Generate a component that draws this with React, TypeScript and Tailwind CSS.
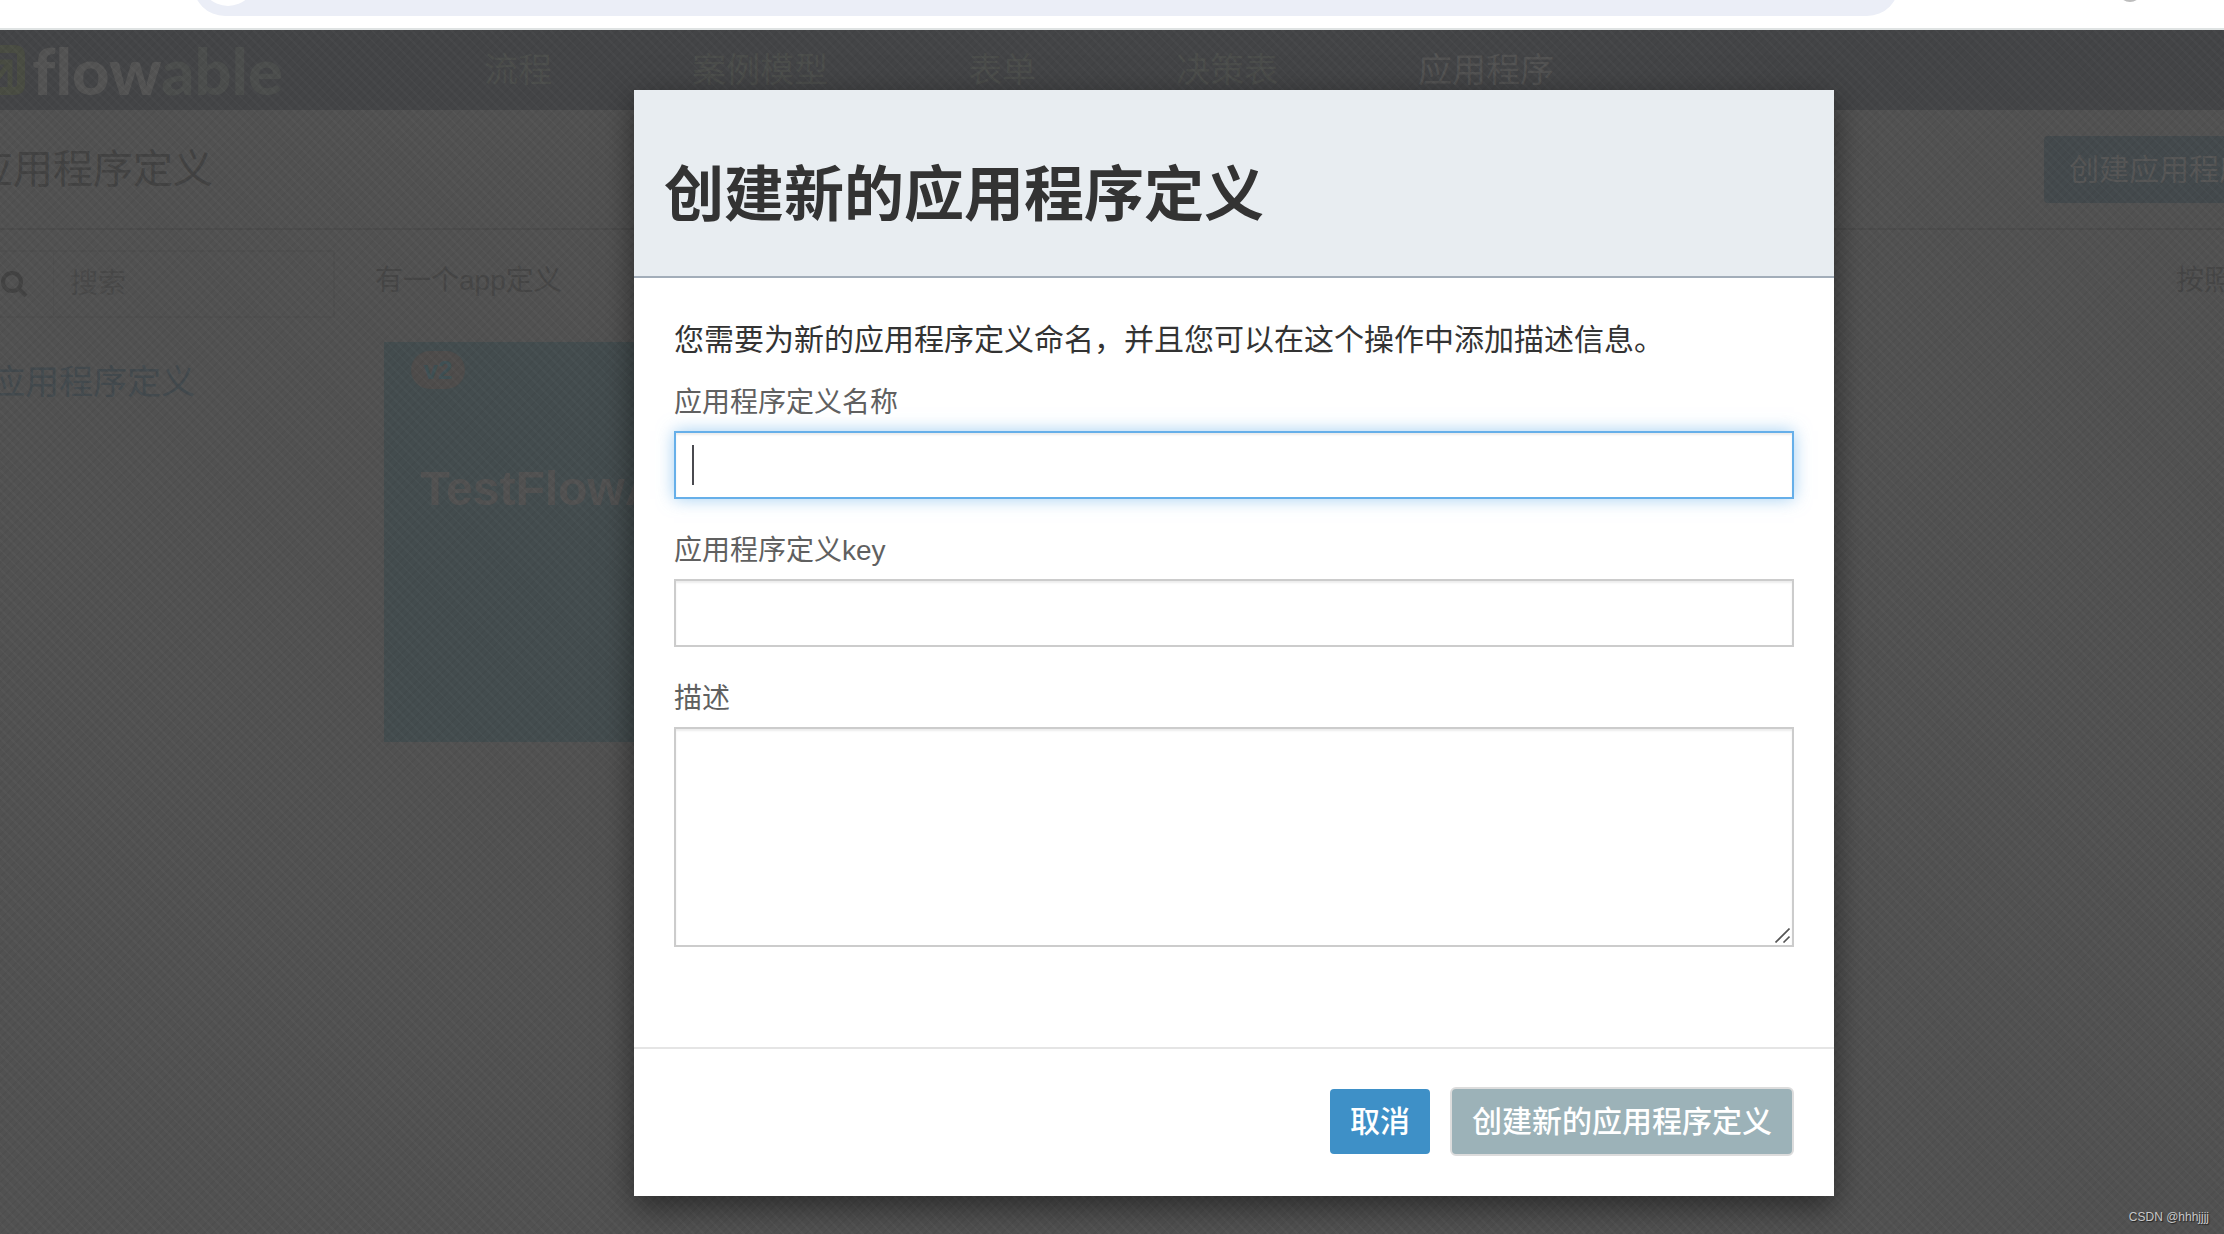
import { useState } from 'react';

const navItems = ['流程', '案例模型', '表单', '决策表', '应用程序'];

type FieldProps = {
  id: string;
  label: string;
  value: string;
  focused?: boolean;
  onChange: (value: string) => void;
};

function TextField({ id, label, value, focused, onChange }: FieldProps) {
  return (
    <div className="mb-7">
      <label htmlFor={id} className="block pb-[6px] pt-[2px] text-[28px] leading-[44px] text-[#606060]">
        {label}
      </label>
      <div className="relative">
        <input
          id={id}
          type="text"
          value={value}
          onChange={(e) => onChange(e.target.value)}
          className={`block h-[68px] w-full border-2 bg-white px-4 text-[28px] text-[#555] caret-transparent outline-none ${
            focused
              ? 'border-[#66afe9] shadow-[inset_0_2px_2px_rgba(0,0,0,0.075),0_0_16px_rgba(102,175,233,0.6)]'
              : 'border-[#ccc] shadow-[inset_0_2px_2px_rgba(0,0,0,0.075)]'
          }`}
        />
        {focused && !value && <span className="absolute left-[18px] top-[14px] h-10 w-[2px] bg-[#4a4a4f]" />}
      </div>
    </div>
  );
}

function BrowserBar() {
  return (
    <div className="relative h-[30px] overflow-hidden border-b-2 border-[#dfe3e3] bg-white">
      <div className="ml-[193px] mr-[325px] h-full">
        <div className="-mt-12 h-16 rounded-full bg-[#ebeef7]" />
      </div>
      <span className="absolute -top-[50px] left-[200px] size-14 rounded-full bg-white" />
      <span className="absolute -top-[22px] left-[2118px] size-6 rounded-full bg-[#bdbdbd]" />
    </div>
  );
}

function Logo() {
  return (
    <a href="#" className="flex w-[484px] shrink-0 items-center">
      <svg width="25" height="50" viewBox="0 0 25 50" fill="none">
        <path d="M-8 4H14Q21 4 21 11V39Q21 46 14 46H-8" stroke="#494c42" strokeWidth="8" />
        <path d="M0 17H10V44M9 18L-2 33" stroke="#494c42" strokeWidth="5" />
      </svg>
      <span className="ml-[7px] font-['Lato',sans-serif] text-[65px] font-black leading-[80px] text-[#535353] [font-variant-ligatures:none]">
        flow<span className="text-[#4b4d4c]">able</span>
      </span>
    </a>
  );
}

function Background() {
  return (
    <div>
      <header className="flex h-20 items-center bg-[#434446]">
        <Logo />
        <nav className="flex gap-[140px] whitespace-nowrap text-[34px] leading-[48px]">
          {navItems.map((item) => (
            <a key={item} href="#" className={item === '应用程序' ? 'text-[#525252]' : 'text-[#4b4d4b]'}>
              {item}
            </a>
          ))}
        </nav>
      </header>

      <div className="-ml-[27px]">
        <div className="flex h-[120px] items-center justify-between border-b-2 border-[#4b4b4b]">
          <h1 className="text-[40px] leading-[56px] text-[#424242]">应用程序定义</h1>
          <button
            type="button"
            className="-mr-[110px] h-[67px] shrink-0 whitespace-nowrap rounded-[4px] bg-[#43494c] px-[25px] text-[30px] text-[#555]"
          >
            创建应用程序定义
          </button>
        </div>

        <div className="flex pt-5">
          <aside className="w-[402px] shrink-0">
            <div className="flex h-[68px] w-[362px] items-center border-2 border-[#4e4e4e]">
              <label htmlFor="search" className="flex h-full w-[53px] shrink-0 items-center justify-end">
                <svg width="28" height="28" viewBox="0 0 28 28" fill="none" stroke="#424242" strokeWidth="4" aria-label="搜索">
                  <circle cx="12" cy="12" r="9" />
                  <path d="M18 18L26 26" />
                </svg>
              </label>
              <span className="ml-[25px] h-full w-px bg-[#4e4e4e]" />
              <input
                id="search"
                placeholder="搜索"
                className="h-full min-w-0 flex-1 bg-transparent pl-4 text-[28px] outline-none placeholder:text-[#484848]"
              />
            </div>
            <a href="#" className="ml-[18px] mt-10 block text-[34px] leading-[48px] text-[#42494d]">
              应用程序定义
            </a>
          </aside>

          <main className="min-w-0 flex-1">
            <div className="flex justify-between text-[28px] leading-[62px] text-[#454545]">
              <p>有一个app定义</p>
              <p className="-mr-2 whitespace-nowrap">按照</p>
            </div>
            <div className="ml-[9px] mt-[30px] h-[400px] w-[500px] bg-[#434c4e] pl-[27px] pt-[9px]">
              <span className="flex h-[38px] w-[54px] items-center justify-center rounded-full bg-[#4e4c4b] text-[26px] font-bold text-[#3f5054]">
                v2
              </span>
              <h3 className="ml-[9px] mt-[70px] text-[48px] font-bold leading-[60px] text-[#515151]">TestFlowApp</h3>
            </div>
          </main>
        </div>
      </div>
    </div>
  );
}

export default function App() {
  const [name, setName] = useState('');
  const [key, setKey] = useState('');
  const [description, setDescription] = useState('');

  return (
    <div className="relative min-h-screen overflow-hidden bg-[#515151] font-['Liberation_Sans','Noto_Sans_CJK_SC',sans-serif]">
      <BrowserBar />
      <Background />

      {/* woven texture over the dimmed page */}
      <div className="pointer-events-none absolute inset-x-0 bottom-0 top-[30px] bg-[repeating-linear-gradient(45deg,rgba(255,255,255,0.025)_0_2px,transparent_2px_7px),repeating-linear-gradient(-45deg,rgba(0,0,0,0.035)_0_2px,transparent_2px_6px)]" />

      <div className="absolute inset-x-0 top-0 flex justify-center pl-[244px] pt-[90px]">
        <form
          role="dialog"
          aria-labelledby="dialog-title"
          onSubmit={(e) => e.preventDefault()}
          className="w-[1200px] max-w-full bg-white shadow-[0_10px_30px_rgba(0,0,0,0.5)]"
        >
          <div className="border-b-2 border-[#a2adb9] bg-[#e8edf1] px-[30px] pb-9 pt-[62px]">
            <h2 id="dialog-title" className="text-[60px] font-bold leading-[88px] text-[#333]">
              创建新的应用程序定义
            </h2>
          </div>

          <div className="px-10 pb-[100px] pt-10">
            <p className="mb-[18px] text-[30px] leading-[43px] text-[#333]">
              您需要为新的应用程序定义命名，并且您可以在这个操作中添加描述信息。
            </p>
            <TextField id="name" label="应用程序定义名称" value={name} onChange={setName} focused />
            <TextField id="key" label="应用程序定义key" value={key} onChange={setKey} />

            <label htmlFor="description" className="block pb-[6px] pt-[2px] text-[28px] leading-[44px] text-[#606060]">
              描述
            </label>
            <div className="relative">
              <textarea
                id="description"
                value={description}
                onChange={(e) => setDescription(e.target.value)}
                className="block h-[220px] w-full resize-none border-2 border-[#ccc] px-4 py-3 text-[28px] text-[#555] shadow-[inset_0_2px_2px_rgba(0,0,0,0.075)] outline-none"
              />
              <svg className="absolute bottom-1 right-1 size-[15px]" viewBox="0 0 15 15" stroke="#555" strokeWidth="1.6">
                <path d="M0.500 14.500L14.500 0.500M8.500 14.500L14.500 8.500" />
              </svg>
            </div>
          </div>

          <div className="flex items-center justify-end gap-5 border-t-2 border-[#e5e5e5] px-10 pb-10 pt-[38px]">
            <button type="button" className="h-[65px] rounded-[4px] bg-[#3e90c7] px-5 text-[30px] font-medium text-white">
              取消
            </button>
            <button
              type="submit"
              disabled
              className="h-[69px] rounded-[6px] border-2 border-[#dcdcdc] bg-[#9cb2b8] px-5 text-[30px] font-medium text-white"
            >
              创建新的应用程序定义
            </button>
          </div>
        </form>
      </div>

      <span className="absolute bottom-[9px] right-[15px] text-[12px] leading-4 text-[#c8c8c8] [text-shadow:1px_1px_1px_#222]">
        CSDN @hhhjjjj
      </span>
    </div>
  );
}
